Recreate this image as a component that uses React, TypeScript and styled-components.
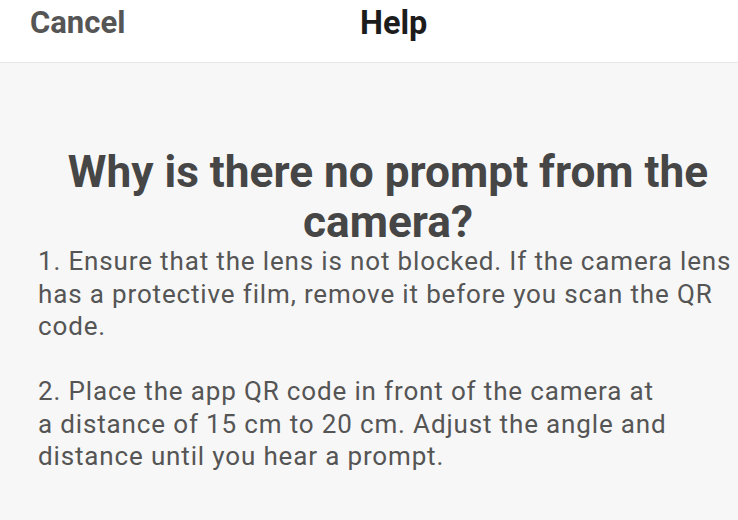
import styled, { createGlobalStyle } from "styled-components";

const GlobalStyle = createGlobalStyle`
  html, body {
    margin: 0;
    padding: 0;
    background: #f7f7f7;
  }

  body {
    font-family: Roboto, "Noto Sans", "Liberation Sans", sans-serif;
  }
`;

const Page = styled.div`
  width: 738px;
  height: 520px;
  overflow: hidden;
  background-color: #f7f7f7;
`;

const TopBar = styled.header`
  display: grid;
  grid-template-columns: 330px auto 1fr;
  align-items: start;
  height: 63px;
  padding: 4px 0 0 30px;

  font-weight: 700;

  background-color: #ffffff;
  border-bottom: 1px solid #e8e8e8;
  box-sizing: border-box;
`;

const BarButton = styled.button`
  justify-self: start;
  padding: 0;

  font: inherit;
  font-size: 31px;
  color: #555555;

  background: none;
  border: none;
`;

const BarTitle = styled.h1`
  margin: 0;
  font: inherit;
  font-size: 32.5px;
  color: #1c1c1c;
`;

const Content = styled.main`
  padding: 84px 0 0 38px;
`;

const Question = styled.h2`
  margin: 0;

  font-size: 44.2px;
  font-weight: 700;
  line-height: 50px;
  color: #464646;
  text-align: center;
`;

const Answer = styled.p`
  margin: -2px 0 0;

  font-size: 26px;
  letter-spacing: 0.85px;
  line-height: 32.5px;
  color: #555555;
  white-space: pre-line;
`;

const answer = `1. Ensure that the lens is not blocked. If the camera lens has a protective film, remove it before you scan the QR code.

2. Place the app QR code in front of the camera at
a distance of 15 cm to 20 cm. Adjust the angle and distance until you hear a prompt.`;

export default function App() {
  return (
    <Page>
      <GlobalStyle />
      <TopBar>
        <BarButton>Cancel</BarButton>
        <BarTitle>Help</BarTitle>
      </TopBar>
      <Content>
        <Question>Why is there no prompt from the camera?</Question>
        <Answer>{answer}</Answer>
      </Content>
    </Page>
  );
}
